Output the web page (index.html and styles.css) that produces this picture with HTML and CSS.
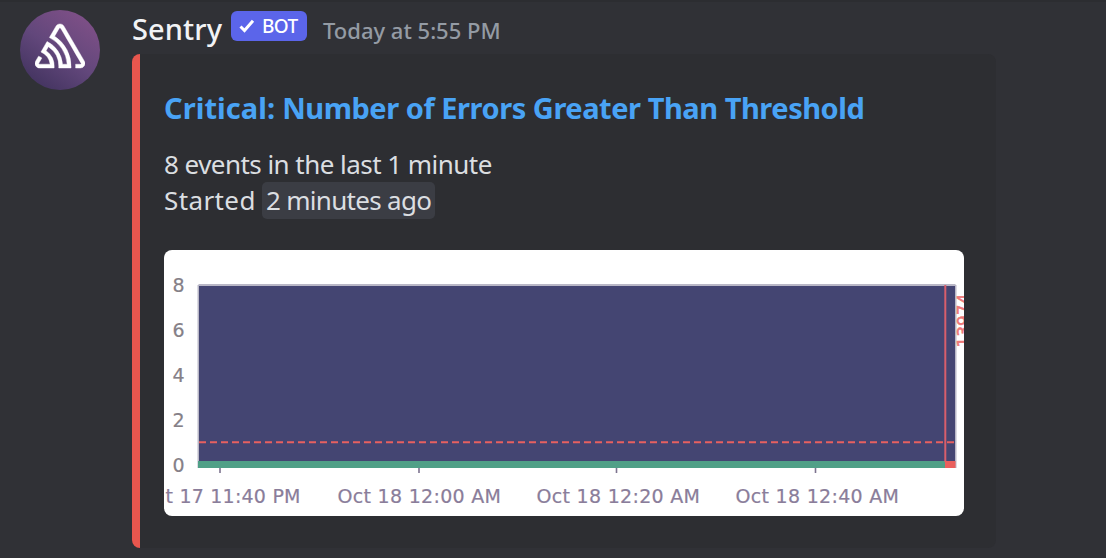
FILE: index.html
```html
<!DOCTYPE html>
<html lang="en">
<head>
<meta charset="utf-8">
<title>Sentry alert</title>
<link rel="stylesheet" href="styles.css">
</head>
<body>
<article class="message">
  <div class="avatar">
    <svg class="logo" viewBox="0 0 24 24" aria-hidden="true"><path d="M13.91 2.505c-.873-1.448-2.972-1.448-3.844 0L6.904 7.92a15.478 15.478 0 0 1 8.53 12.811h-2.221A13.301 13.301 0 0 0 5.784 9.814l-2.926 5.06a7.65 7.65 0 0 1 4.435 5.848H2.194a.365.365 0 0 1-.298-.534l1.413-2.402a5.16 5.16 0 0 0-1.614-.913L.296 19.275a2.182 2.182 0 0 0 .812 2.999 2.24 2.24 0 0 0 1.086.288h6.983a9.322 9.322 0 0 0-3.845-8.318l1.11-1.922a11.47 11.47 0 0 1 4.95 10.24h5.915a17.242 17.242 0 0 0-7.885-15.28l2.244-3.845a.37.37 0 0 1 .504-.13c.255.14 9.75 16.708 9.928 16.9a.365.365 0 0 1-.327.543h-2.287c.029.612.029 1.223 0 1.831h2.297a2.206 2.206 0 0 0 1.922-3.31z"/></svg>
  </div>
  <div class="content">
    <header class="header">
      <span class="name">Sentry</span>
      <span class="bot"><svg class="check" viewBox="0 0 16 14" aria-hidden="true"><path d="M1.5 7.5 5.5 11.5 14 1.8"/></svg><span class="bot-text">BOT</span></span>
      <time class="time">Today at 5:55 PM</time>
    </header>
    <section class="embed">
      <h1 class="title"><span class="severity">Critical:</span> Number of Errors Greater Than Threshold</h1>
      <div class="line"><span class="events">8 events in the last 1 minute</span></div>
      <div class="line"><span class="started">Started</span><span class="stamp">2 minutes ago</span></div>
      <svg class="chart" viewBox="0 0 800 266" role="img" aria-label="Errors chart">
        <path class="axis" d="M34.5 35H791.5M34.500 35V218M791.500 35V218"/>
        <rect class="area" x="35" y="36" width="756" height="176"/>
        <rect class="ok" x="34" y="211" width="747" height="7"/>
        <path class="threshold" d="M35 192.3H790"/>
        <path class="incident" d="M781.3 35V212"/>
        <rect class="critical" x="781" y="211" width="10.5" height="7"/>
        <path class="tick" d="M56 218v5M255 218v5M452.500 218v5M651.500 218v5"/>
        <g class="y-label">
          <text x="8.500" y="42">8</text><text x="8.500" y="87">6</text><text x="8.500" y="132">4</text><text x="8.500" y="177">2</text><text x="8.500" y="221.500">0</text>
        </g>
        <g class="x-label">
          <text x="1.500" y="253" textLength="135">t 17 11:40 PM</text>
          <text x="173.500" y="253" textLength="163.500">Oct 18 12:00 AM</text>
          <text x="372.500" y="253" textLength="163.500">Oct 18 12:20 AM</text>
          <text x="571.500" y="253" textLength="163.500">Oct 18 12:40 AM</text>
        </g>
        <text class="release" transform="translate(805.500 97.500) rotate(-90)" textLength="54">13974</text>
      </svg>
    </section>
  </div>
</article>
</body>
</html>
```
FILE: styles.css
```css
* { box-sizing: border-box; }
body {
  margin: 0;
  height: 558px;
  overflow: hidden;
  background: #303136;
  border-top: 2px solid #2c2d31;
  font-family: "Noto Sans", "Open Sans", sans-serif;
}
.message { display: flex; gap: 32px; padding: 8px 20px 0; }
.avatar {
  flex: none;
  width: 80px;
  height: 80px;
  border-radius: 50%;
  background: linear-gradient(215deg, #7c4f86 15%, #62477b 52%, #42335f 90%);
  padding: 11px 15px 9px;
}
.logo { display: block; width: 50px; height: 50px; fill: #fff; stroke: #fff; stroke-width: .2; }
.content { width: 864px; }
.header { display: flex; height: 44px; white-space: nowrap; }
.name {
  width: 99px;
  font-size: 29px;
  font-weight: 500;
  line-height: 37px;
  letter-spacing: .1px;
  color: #f2f3f5;
}
.bot {
  display: flex;
  align-items: center;
  gap: 7px;
  width: 76px;
  height: 30px;
  margin-top: 1px;
  padding-left: 8px;
  border-radius: 6px;
  background: #5b65ea;
  color: #fff;
}
.check { width: 16px; height: 14px; fill: none; stroke: #fff; stroke-width: 3; }
.bot-text { font-size: 19px; font-weight: 500; line-height: 30px; letter-spacing: -.6px; }
.time { margin-left: 16px; font-size: 22px; font-weight: 500; line-height: 41px; color: #949ba4; }
.embed {
  height: 494px;
  padding: 34px 24px 0;
  border-left: 8px solid #e8564e;
  border-radius: 8px;
  background: #2d2e32;
}
.title {
  margin: 0 0 18px;
  font-size: 29px;
  line-height: 40px;
  font-weight: 700;
  letter-spacing: -.46px;
  color: #49a3f5;
  white-space: nowrap;
}
.severity { letter-spacing: .05px; }
.line { display: flex; height: 36px; font-size: 26px; line-height: 36px; color: #dbdee1; white-space: nowrap; }
.events { letter-spacing: -.54px; }
.started { width: 98px; letter-spacing: .4px; }
.stamp {
  width: 173px;
  height: 37px;
  padding-left: 4px;
  border-radius: 5px;
  background: #3b3d44;
  letter-spacing: -.7px;
}
.chart {
  display: block;
  width: 800px;
  height: 266px;
  margin-top: 32px;
  border-radius: 8px;
  background: #fff;
  font-family: "DejaVu Sans", sans-serif;
}
.axis { fill: none; stroke: #b9b7c6; stroke-width: 2; }
.area { fill: #444572; }
.ok { fill: #50a087; }
.critical { fill: #ea5f5d; }
.threshold { stroke: #e76060; stroke-width: 2; stroke-dasharray: 7 4; }
.incident { stroke: #d85f6c; stroke-width: 2; }
.tick { stroke: #7d738f; stroke-width: 1.6; }
.y-label { font-size: 19px; fill: #858087; stroke: #858087; stroke-width: .2; }
.x-label { font-size: 19px; fill: #8a7d9a; stroke: #8a7d9a; stroke-width: .2; }
.release { font-size: 17px; fill: #ee7777; stroke: #ee7777; stroke-width: .5; }
```
